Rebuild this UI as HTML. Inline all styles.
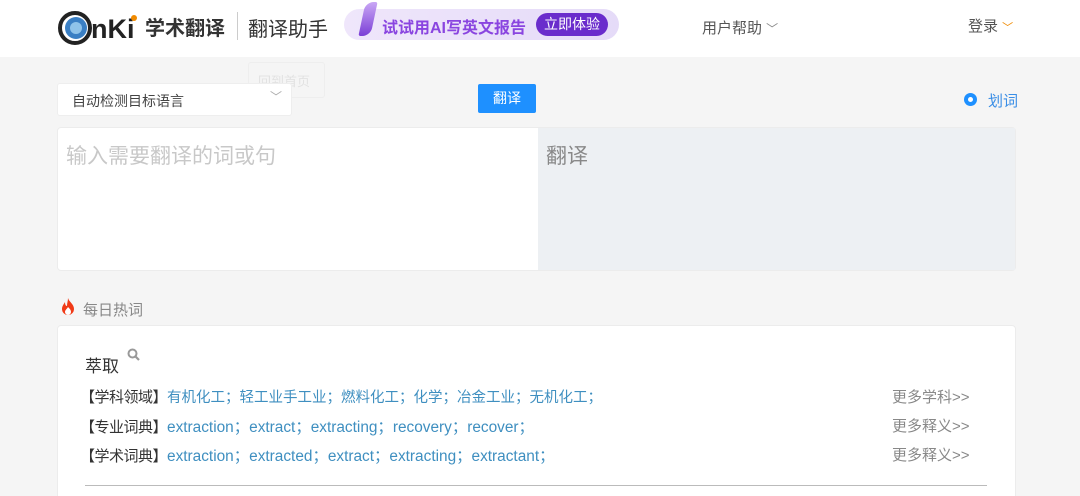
<!DOCTYPE html>
<html><head><meta charset="utf-8"><style>
*{margin:0;padding:0;box-sizing:border-box}
html,body{width:1080px;height:496px;overflow:hidden}
body{background:#f5f5f5;font-family:"Liberation Sans","Noto Sans CJK SC",sans-serif;position:relative}
.a{position:absolute;white-space:nowrap}
.l{font-size:15px;letter-spacing:-0.5px}
.e{color:#3f8fc0;font-size:15.4px}
.c{color:#3f8fc0;font-size:14.5px}
</style></head><body>
<div class="a" style="left:0;top:0;width:1080px;height:57px;background:#fff"></div>
<svg class="a" style="left:57px;top:10px" width="90" height="36" viewBox="0 0 90 36">
<circle cx="18" cy="18" r="15" fill="none" stroke="#222" stroke-width="4"/>
<circle cx="19" cy="18" r="11" fill="#3a7fc4"/>
<circle cx="19" cy="18" r="6" fill="#8fc3ea"/>
<text x="34" y="28" font-family="Liberation Sans" font-weight="bold" font-size="27" fill="#222">nKi</text>
<circle cx="77" cy="8" r="3" fill="#f08a00"/>
</svg>
<div class="a" style="left:145px;top:12px;font-size:20px;font-weight:bold;color:#333">学术翻译</div>
<div class="a" style="left:237px;top:12px;width:1px;height:28px;background:#ccc"></div>
<div class="a" style="left:248px;top:13px;font-size:20px;color:#333">翻译助手</div>
<div class="a" style="left:344px;top:9px;width:275px;height:31px;border-radius:16px;background:linear-gradient(90deg,#efe6fb,#e5dbf8)"></div>
<div class="a" style="left:362px;top:2px;width:12px;height:34px;background:linear-gradient(#c9a7f5,#7b3fd6);border-radius:8px 2px 8px 2px;transform:skewX(-12deg)"></div>
<div class="a" style="left:382px;top:14px;font-size:16px;font-weight:bold;color:#8a45e0">试试用AI写英文报告</div>
<div class="a" style="left:536px;top:13px;width:72px;height:23px;border-radius:12px;background:#6a2ccc;color:#fff;font-size:14px;line-height:23px;text-align:center">立即体验</div>
<div class="a" style="left:702px;top:17px;font-size:15px;color:#555">用户帮助 <span style="font-size:12px;color:#888">﹀</span></div>
<div class="a" style="left:968px;top:15px;font-size:15px;color:#555">登录 <span style="font-size:11px;color:#f08a00">﹀</span></div>
<div class="a" style="left:248px;top:62px;width:77px;height:36px;border:1px solid #eee;border-radius:3px;color:#e2e2e2;font-size:13px;padding:8px 0 0 9px">回到首页</div>
<div class="a" style="left:57px;top:83px;width:235px;height:33px;background:#fff;border-radius:3px;border:1px solid #eee"></div>
<div class="a" style="left:72px;top:91px;font-size:14px;color:#444">自动检测目标语言</div>
<div class="a" style="left:270px;top:88px;font-size:12px;color:#aaa">﹀</div>
<div class="a" style="left:478px;top:84px;width:58px;height:29px;background:#1e90ff;border-radius:2px;color:#fff;font-size:14px;line-height:29px;text-align:center">翻译</div>
<div class="a" style="left:964px;top:93px;width:13px;height:13px;border-radius:50%;background:#1e90ff"></div>
<div class="a" style="left:968px;top:97px;width:5px;height:5px;border-radius:50%;background:#fff"></div>
<div class="a" style="left:988px;top:90px;font-size:15px;color:#3a8ee6">划词</div>
<div class="a" style="left:57px;top:127px;width:959px;height:144px;background:#fff;border:1px solid #ececec;border-radius:4px"></div>
<div class="a" style="left:538px;top:128px;width:477px;height:142px;background:#edf0f3"></div>
<div class="a" style="left:66px;top:140px;font-size:21px;color:#c8c8c8">输入需要翻译的词或句</div>
<div class="a" style="left:546px;top:140px;font-size:21px;color:#888">翻译</div>
<svg class="a" style="left:60px;top:298px" width="16" height="18" viewBox="0 0 16 18"><path d="M8 0C9 4 14 6 14 11a6 6 0 0 1-12 0C2 8 4 6 5 4c0 3 1 4 2 4C7 5 8 3 8 0z" fill="#f03a17"/><path d="M8 9c2 2 3 3 3 5a3 3 0 0 1-6 0c0-2 2-3 3-5z" fill="#fff"/></svg>
<div class="a" style="left:83px;top:299px;font-size:15px;color:#888">每日热词</div>
<div class="a" style="left:57px;top:325px;width:959px;height:171px;background:#fff;border:1px solid #ececec;border-bottom:none;border-radius:4px 4px 0 0"></div>
<div class="a" style="left:85px;top:352px;font-size:17px;color:#333">萃取</div>
<svg class="a" style="left:127px;top:348px" width="14" height="14" viewBox="0 0 14 14"><circle cx="5.5" cy="5.5" r="4" fill="none" stroke="#999" stroke-width="2"/><path d="M8.5 8.5L12 12" stroke="#999" stroke-width="2.2"/></svg>
<div class="a" style="left:80px;top:386px;color:#333"><span class="l">【学科领域】</span><span class="c">有机化工；轻工业手工业；燃料化工；化学；冶金工业；无机化工；</span></div>
<div class="a" style="left:80px;top:415px;color:#333"><span class="l">【专业词典】</span><span class="e">extraction；extract；extracting；recovery；recover；</span></div>
<div class="a" style="left:80px;top:444px;color:#333"><span class="l">【学术词典】</span><span class="e">extraction；extracted；extract；extracting；extractant；</span></div>
<div class="a" style="left:892px;top:386px;font-size:15px;color:#888">更多学科&gt;&gt;</div>
<div class="a" style="left:892px;top:415px;font-size:15px;color:#888">更多释义&gt;&gt;</div>
<div class="a" style="left:892px;top:444px;font-size:15px;color:#888">更多释义&gt;&gt;</div>
<div class="a" style="left:85px;top:485px;width:902px;height:1px;background:#bbb"></div>
</body></html>
